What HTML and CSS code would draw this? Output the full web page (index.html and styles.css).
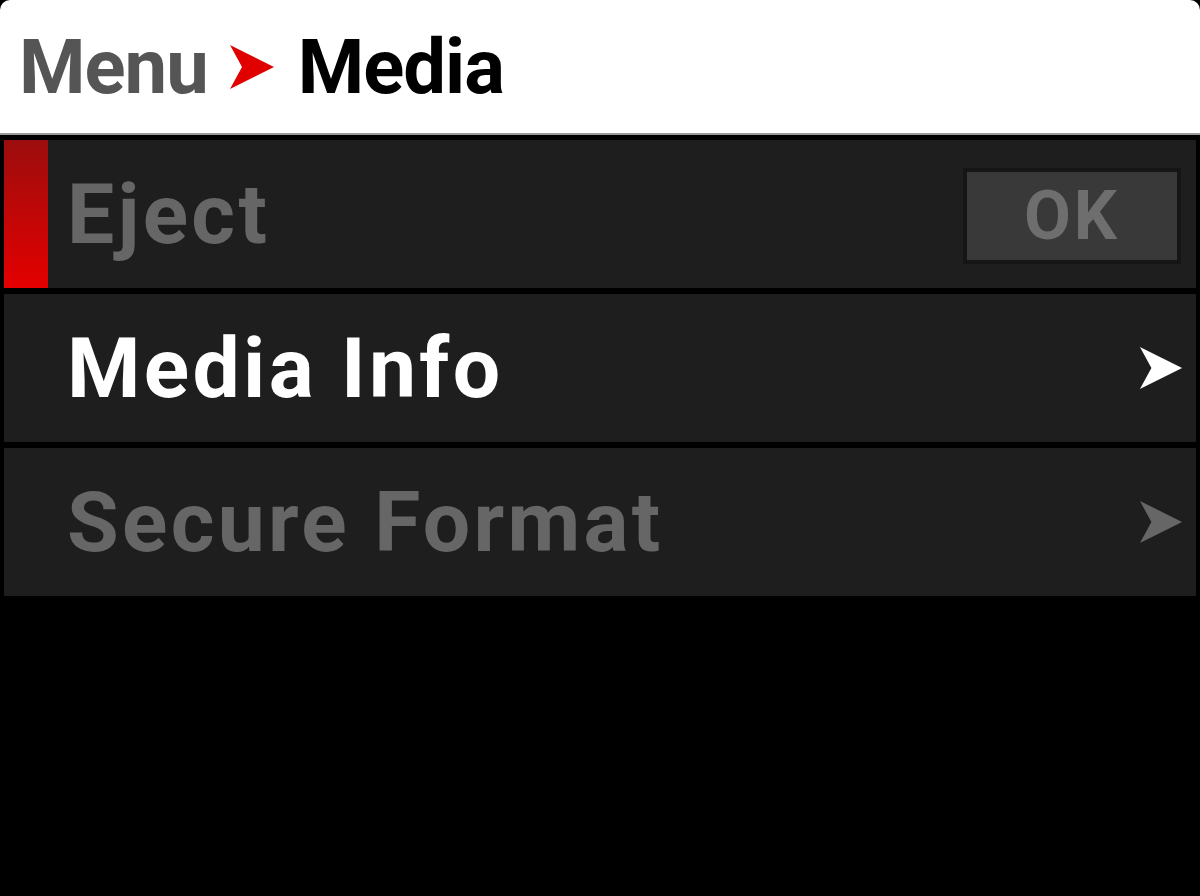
FILE: index.html
```html
<!doctype html>
<html lang="en">
<head>
    <meta charset="UTF-8">
    <title>Menu - Media</title>
    <link rel="stylesheet" href="styles.css">
</head>
<body>
    <svg xmlns="http://www.w3.org/2000/svg" style="display: none;">
        <symbol id="arrow" viewBox="0 0 48 48">
            <path d="M2 2 L46 24 L2 46 L14 24 Z"/>
        </symbol>
    </svg>

    <header>
        <span class="crumb">Menu</span>
        <svg class="crumb-arrow"><use href="#arrow"/></svg>
        <span class="title">Media</span>
    </header>

    <main class="menu">
        <div class="row selected disabled">
            <span class="label">Eject</span>
            <button class="ok">OK</button>
        </div>
        <div class="row">
            <span class="label">Media Info</span>
            <svg class="chevron"><use href="#arrow"/></svg>
        </div>
        <div class="row disabled">
            <span class="label">Secure Format</span>
            <svg class="chevron"><use href="#arrow"/></svg>
        </div>
    </main>
</body>
</html>
```

FILE: styles.css
```css
:root {
    --cl-row: #1e1e1e;
    --cl-dim: #666666;
    --cl-crumb: #555555;
    --cl-red: #e00000;
}

html, body {
    margin: 0;
    padding: 0;
    width: 100%;
    height: 100%;
    background: black;
    font-family: Roboto, "Liberation Sans", sans-serif;
    font-weight: bold;
}

header {
    height: 135px;
    background: white;
    border-radius: 10px 10px 0 0;
    border-bottom: solid 2px #9a9a9a;
    display: flex;
    align-items: center;
    padding: 0 0 0 19px;
    box-sizing: border-box;
    font-size: 76px;
    letter-spacing: -1px;
}

.crumb {
    color: var(--cl-crumb);
}

.crumb-arrow {
    width: 48px;
    height: 48px;
    margin: 0 22px 0 20px;
    fill: var(--cl-red);
}

.title {
    color: black;
}

.menu {
    display: flex;
    flex-direction: column;
    gap: 6px;
    padding: 5px 4px 0 4px;
}

.row {
    height: 148px;
    background: var(--cl-row);
    display: flex;
    align-items: center;
    padding: 0 12px 0 63px;
    font-size: 84px;
    letter-spacing: 3.3px;
    color: white;
    position: relative;
}

.row.disabled {
    color: var(--cl-dim);
}

.row.selected::before {
    content: "";
    position: absolute;
    left: 0;
    top: 0;
    bottom: 0;
    width: 44px;
    background: linear-gradient(#9c0d0d, #e40000);
}

.label {
    flex: 1;
}

.ok {
    width: 218px;
    height: 96px;
    background: #393939;
    border: solid 4px #161616;
    color: #6e6e6e;
    font-family: Roboto, "Liberation Sans", sans-serif;
    font-weight: bold;
    font-size: 68px;
    letter-spacing: 3px;
    padding: 0;
    margin: 4px 3px 0 0;
    box-sizing: border-box;
}

.chevron {
    width: 46px;
    height: 48px;
    fill: currentColor;
}
```
